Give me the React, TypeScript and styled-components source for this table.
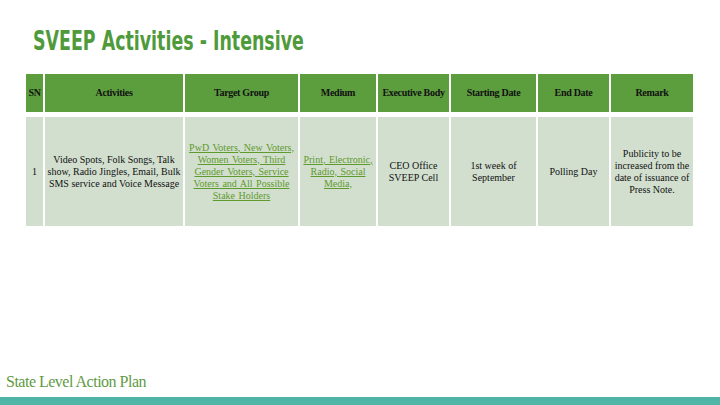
import styled, { createGlobalStyle } from "styled-components";

const GlobalStyle = createGlobalStyle`
  html, body {
    margin: 0;
    padding: 0;
    background: #ffffff;
  }
`;

const columns = [17, 138, 113, 76, 71, 85, 71, 82];

const headers = [
  "SN",
  "Activities",
  "Target Group",
  "Medium",
  "Executive Body",
  "Starting Date",
  "End Date",
  "Remark",
];

const App = () => {
  return (
    <Slide>
      <GlobalStyle />
      <Title>SVEEP Activities - Intensive</Title>
      <Table>
        {headers.map((h) => (
          <HeadCell key={h}>{h}</HeadCell>
        ))}
        <BodyCell>1</BodyCell>
        <BodyCell>
          Video Spots, Folk Songs, Talk show, Radio Jingles, Email, Bulk SMS
          service and Voice Message
        </BodyCell>
        <BodyCell>
          <LinkText>
            PwD Voters, New Voters,
            <br />
            Women Voters, Third
            <br />
            Gender Voters, Service
            <br />
            Voters and All Possible
            <br />
            Stake Holders
          </LinkText>
        </BodyCell>
        <BodyCell>
          <LinkText>
            Print, Electronic,
            <br />
            Radio, Social
            <br />
            Media,
          </LinkText>
        </BodyCell>
        <BodyCell $pad={10}>
          CEO Office
          <br />
          SVEEP Cell
        </BodyCell>
        <BodyCell $pad={16}>1st week of September</BodyCell>
        <BodyCell>Polling Day</BodyCell>
        <BodyCell $pad={3}>
          Publicity to be increased from the date of issuance of Press Note.
        </BodyCell>
      </Table>
      <Spacer />
      <Footer>State Level Action Plan</Footer>
      <Bar />
    </Slide>
  );
};

export default App;

const Slide = styled.div`
  width: 720px;
  height: 405px;
  display: flex;
  flex-direction: column;
  overflow: hidden;
  background: #ffffff;
`;

/* no condensed face is installed, so the bold sans is squeezed */
const Title = styled.h1`
  margin: 24px 0 0 33px;
  font-family: "DejaVu Sans", sans-serif;
  font-weight: bold;
  font-size: 26px;
  line-height: 34px;
  color: #4f9a3a;
  white-space: nowrap;
  transform: scaleX(0.67);
  transform-origin: left center;
`;

const Table = styled.div`
  margin: 16px 0 0 26px;
  display: grid;
  grid-template-columns: ${columns.map((c) => c + "px").join(" ")};
  grid-template-rows: 38px 109px;
  column-gap: 2px;
  row-gap: 5px;
  font-family: "Liberation Serif", "Times New Roman", serif;
  font-size: 10px;
  line-height: 12px;
  color: #111111;
`;

const HeadCell = styled.div`
  background: #5c9e3e;
  display: flex;
  align-items: center;
  justify-content: center;
  text-align: center;
  font-weight: bold;
  letter-spacing: -0.3px;
`;

const BodyCell = styled.div<{ $pad?: number }>`
  background: #d2dfcf;
  display: flex;
  align-items: center;
  justify-content: center;
  text-align: center;
  padding: 0 ${(p) => p.$pad ?? 1}px;
`;

const LinkText = styled.span`
  color: #5f9a2c;
  text-decoration: underline;
  white-space: nowrap;
  word-spacing: 1px;
`;

const Spacer = styled.div`
  flex: 1;
`;

const Footer = styled.div`
  margin: 0 0 6px 6px;
  font-family: "Liberation Serif", "Times New Roman", serif;
  font-size: 16px;
  line-height: 18px;
  letter-spacing: -0.5px;
  color: #5f9a45;
`;

const Bar = styled.div`
  height: 8px;
  background: #4fb5a6;
`;
